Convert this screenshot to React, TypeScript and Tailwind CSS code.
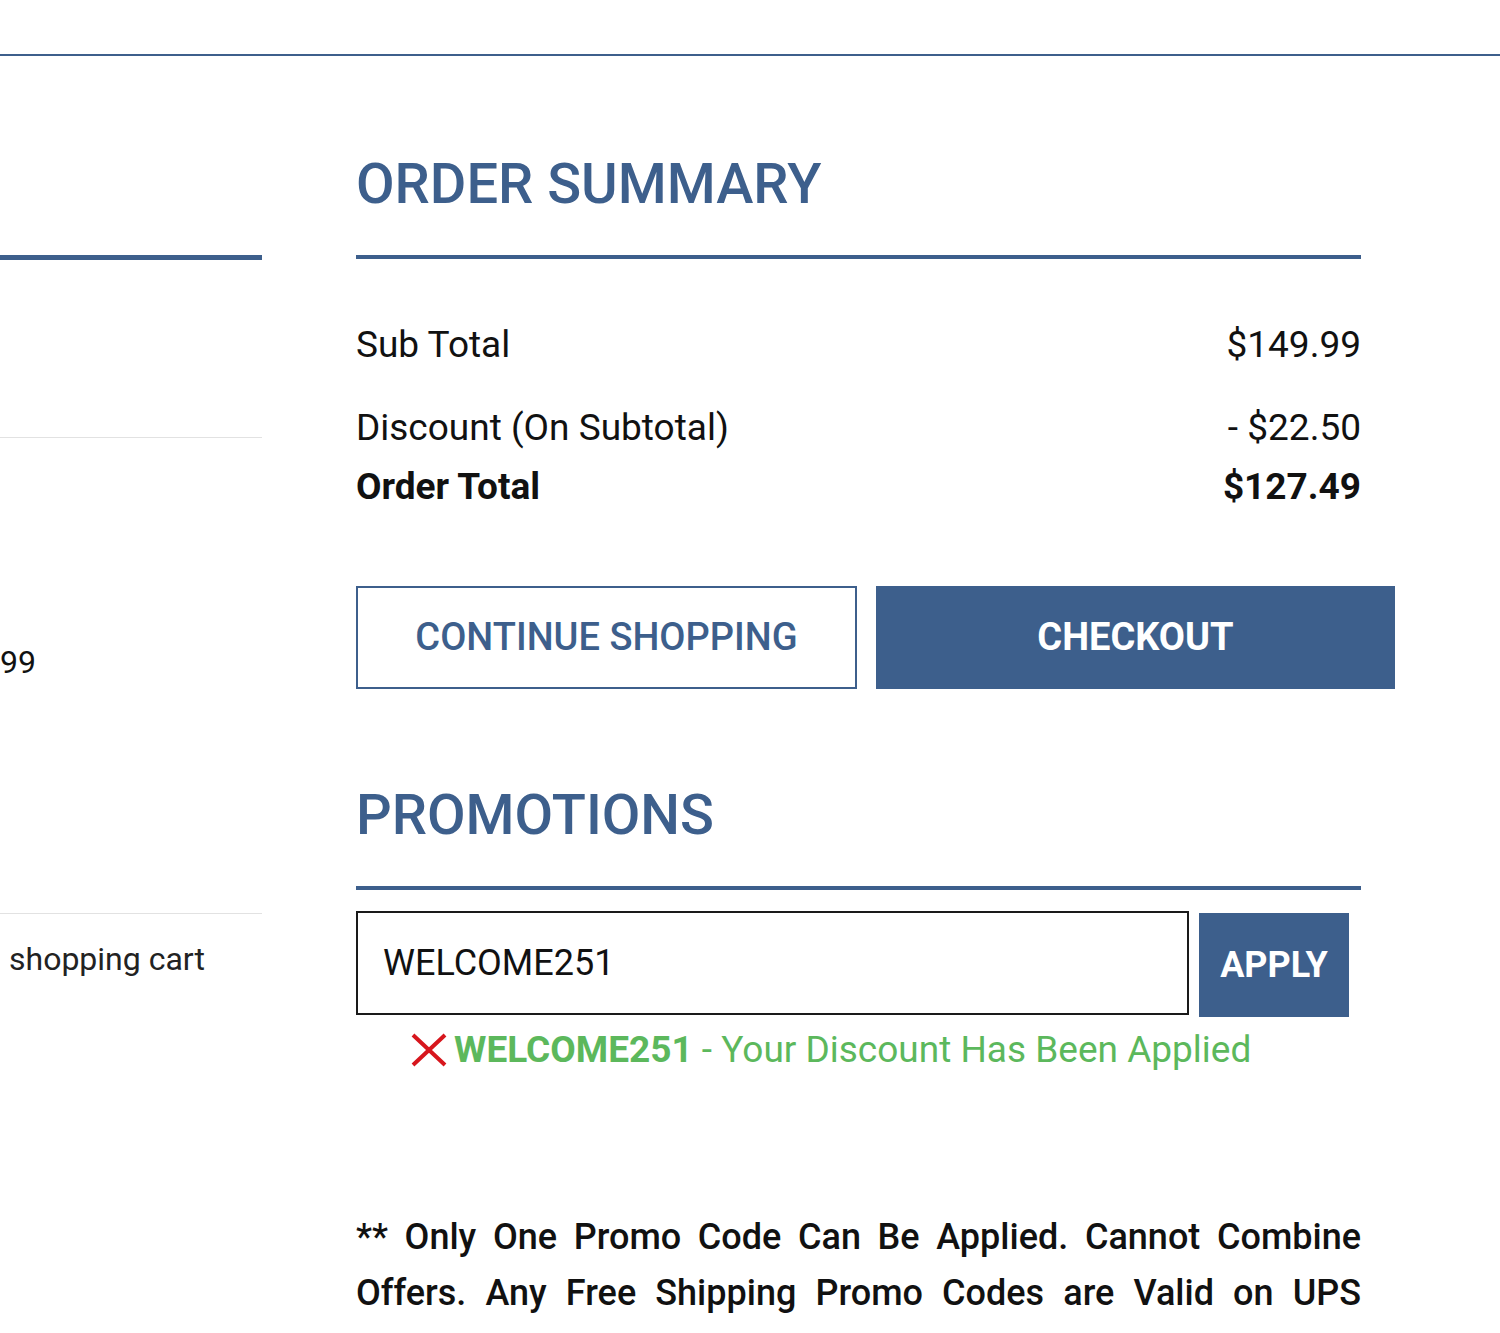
import React from "react";

function RedX() {
  return (
    <svg width="38" height="34" viewBox="0 0 38 34" className="shrink-0">
      <path d="M3 2 L35 32 M35 2 L3 32" stroke="#d7161d" strokeWidth="4" fill="none" />
    </svg>
  );
}

export default function App() {
  return (
    <div className="min-h-[1333px] bg-white font-['Roboto',sans-serif] text-[#111] overflow-hidden">
      <div className="mt-[54px] h-[2px] w-full bg-[#3d5f8c]" />

      <div className="flex">
        {/* left column (cart list, cut off) */}
        <div className="w-[262px] shrink-0">
          <div className="mt-[199px] h-[5px] bg-[#3d5f8c]" />
          <div className="mt-[177px] h-px bg-[#e2e2e2]" />
          <div className="mt-[204px] text-[32px] leading-[40px]">99</div>
          <div className="mt-[231px] h-px bg-[#e2e2e2]" />
          <div className="mt-[25px] pl-[9px] text-[32px] leading-[40px] text-[#222]">
            shopping cart
          </div>
        </div>

        {/* order summary */}
        <div className="ml-[94px] w-[1005px] shrink-0">
          <h2 className="mt-[100px] text-[56px] leading-[56px] font-medium text-[#3d5f8c]">
            ORDER SUMMARY
          </h2>
          <div className="mt-[43px] h-[4px] bg-[#3d5f8c]" />

          <div className="mt-[62px] flex justify-between text-[37px] leading-[48px]">
            <span>Sub Total</span>
            <span>$149.99</span>
          </div>
          <div className="mt-[35px] flex justify-between text-[37px] leading-[48px]">
            <span>Discount (On Subtotal)</span>
            <span>- $22.50</span>
          </div>
          <div className="mt-[11px] flex justify-between text-[37px] leading-[48px] font-bold">
            <span>Order Total</span>
            <span>$127.49</span>
          </div>

          <div className="mt-[75px] flex w-[1039px]">
            <button className="h-[103px] w-[501px] border-2 border-[#3d5f8c] bg-white text-[38px] font-medium text-[#3d5f8c]">
              CONTINUE SHOPPING
            </button>
            <button className="ml-[19px] h-[103px] w-[519px] bg-[#3d5f8c] text-[38px] font-bold text-white">
              CHECKOUT
            </button>
          </div>

          <h2 className="mt-[98px] text-[56px] leading-[56px] font-medium text-[#3d5f8c]">
            PROMOTIONS
          </h2>
          <div className="mt-[43px] h-[4px] bg-[#3d5f8c]" />

          <div className="mt-[21px] flex items-start">
            <div className="flex h-[104px] w-[833px] items-center border-2 border-[#1a1a1a] pl-[25px] text-[36px]">
              WELCOME251
            </div>
            <button className="ml-[10px] mt-[2px] h-[104px] w-[150px] bg-[#3d5f8c] text-[36px] font-bold text-white">
              APPLY
            </button>
          </div>

          <div className="mt-[9px] flex items-center pl-[54px] text-[37px] leading-[48px] text-[#5cb85c]">
            <RedX />
            <span className="ml-[6px] font-bold">WELCOME251</span>
            <span className="whitespace-pre"> - Your Discount Has Been Applied</span>
          </div>

          <p className="mt-[135px] text-justify text-[36px] leading-[56px] font-medium text-[#111]">
            ** Only One Promo Code Can Be Applied. Cannot Combine Offers. Any Free Shipping Promo
            Codes are Valid on UPS Standard. USPS and International Orders Do Not Qualify for Free
            Shipping.
          </p>
        </div>
      </div>
    </div>
  );
}
